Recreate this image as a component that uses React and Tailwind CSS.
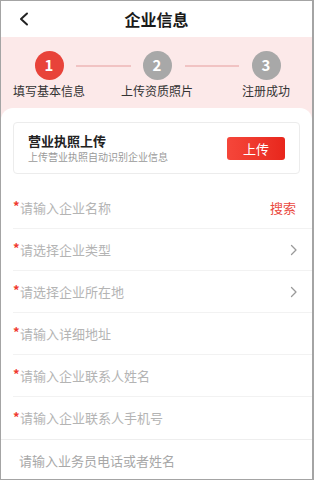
import React from 'react';

const steps = [
  { n: 1, label: '填写基本信息', active: true },
  { n: 2, label: '上传资质照片', active: false },
  { n: 3, label: '注册成功', active: false },
];

const rows = [
  { text: '请输入企业名称', required: true, right: 'search' },
  { text: '请选择企业类型', required: true, right: 'arrow' },
  { text: '请选择企业所在地', required: true, right: 'arrow' },
  { text: '请输入详细地址', required: true },
  { text: '请输入企业联系人姓名', required: true },
  { text: '请输入企业联系人手机号', required: true, last: true },
];

function Step({ step }) {
  return (
    <div className="w-[72px] flex flex-col items-center shrink-0">
      <div
        className={`w-[29px] h-[29px] rounded-full flex items-center justify-center text-white text-[15px] font-bold ${
          step.active ? 'bg-[#e8433a]' : 'bg-[#a8a8a8]'
        }`}
      >
        {step.n}
      </div>
      <span className="mt-[3px] text-[12px] leading-[16px] text-[#333] whitespace-nowrap">{step.label}</span>
    </div>
  );
}

function Chevron() {
  return (
    <svg width="8" height="12" viewBox="0 0 8 12" fill="none">
      <path d="M1.5 1.5 L6 6 L1.5 10.5" stroke="#9a9a9a" strokeWidth="1.3" strokeLinecap="round" strokeLinejoin="round" />
    </svg>
  );
}

export default function App() {
  return (
    <div
      className="w-[314px] h-[480px] overflow-hidden border border-r-2 border-[#a4a4a4] bg-white flex flex-col"
      style={{ fontFamily: '"Noto Sans CJK SC", "Noto Sans", sans-serif' }}
    >
      {/* Header */}
      <div className="h-[36px] shrink-0 flex items-center relative">
        <div className="pl-[18px] w-[60px]">
          <svg width="10" height="14" viewBox="0 0 10 14" fill="none">
            <path d="M8 1.5 L2 7 L8 12.5" stroke="#222" strokeWidth="2" strokeLinecap="round" strokeLinejoin="round" />
          </svg>
        </div>
        <h1 className="flex-1 text-center text-[16px] font-bold text-[#1a1a1a] pr-[60px]">企业信息</h1>
      </div>

      {/* Steps + form */}
      <div className="flex-1 bg-[#fce9e9] flex flex-col">
        <div className="pt-[14px] pl-[12px] flex items-start">
          <Step step={steps[0]} />
          <div className="w-[55px] h-[2px] bg-[#f1c3c3] mt-[14px] -ml-[9px] -mr-[10px] shrink-0" />
          <Step step={steps[1]} />
          <div className="w-[54px] h-[2px] bg-[#f1c3c3] mt-[14px] -ml-[8px] -mr-[9px] shrink-0" />
          <Step step={steps[2]} />
        </div>

        <div className="flex-1 mt-[9px] bg-white rounded-t-[12px] pt-[14px]">
          {/* Upload card */}
          <div className="mx-[12px] h-[52px] border border-[#ececec] rounded-[4px] flex items-center justify-between pl-[14px] pr-[14px]">
            <div className="flex flex-col">
              <span className="text-[13px] font-bold text-[#222] leading-[17px]">营业执照上传</span>
              <span className="text-[10px] text-[#9a9a9a] leading-[14px] mt-[1px]">上传营业执照自动识别企业信息</span>
            </div>
            <button className="w-[58px] h-[23px] rounded-[3px] bg-gradient-to-r from-[#f5463a] to-[#e8261c] text-white text-[13px] leading-none">
              上传
            </button>
          </div>

          {/* Form rows */}
          <div className="mt-[13px] pl-[12px]">
            {rows.map((row) => (
              <div
                key={row.text}
                className={`h-[42px] flex items-center pr-[14px] ${row.last ? '' : 'border-b border-[#f2f2f2]'}`}
              >
                <span className="text-[#f03a2e] text-[13px] font-bold leading-none w-[7px] -mt-[4px]">*</span>
                <span className="flex-1 text-[13px] text-[#b4b4b4]">{row.text}</span>
                {row.right === 'search' && <span className="text-[13px] text-[#ea4a3f] mr-[2px]">搜索</span>}
                {row.right === 'arrow' && <Chevron />}
              </div>
            ))}
          </div>
          <div className="border-t border-[#eeeeee] h-[42px] flex items-center pl-[18px]">
            <span className="text-[13px] text-[#a8a8a8]">请输入业务员电话或者姓名</span>
          </div>
        </div>
      </div>
    </div>
  );
}
